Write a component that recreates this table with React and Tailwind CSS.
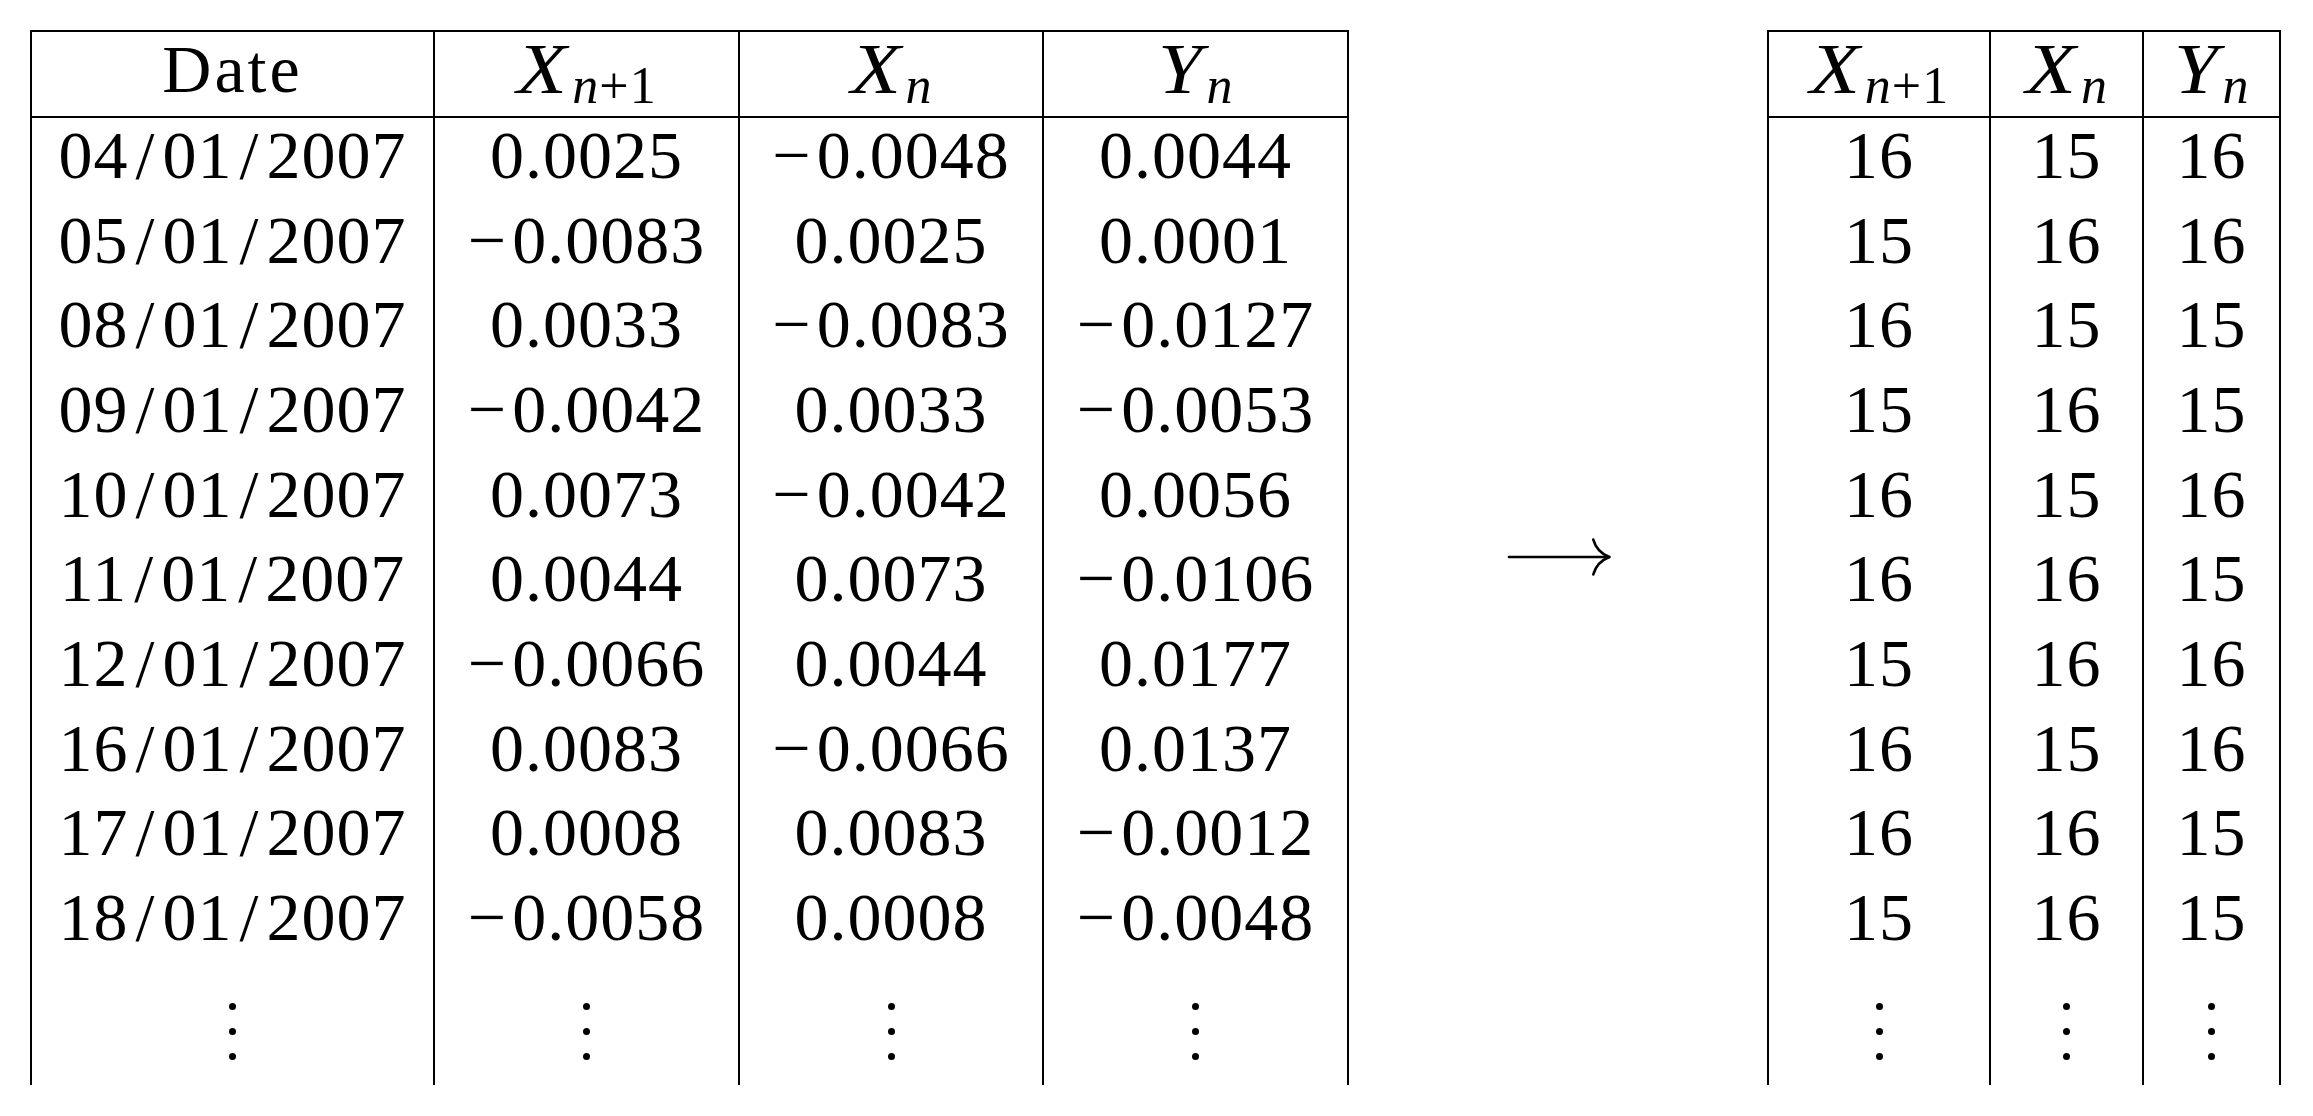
import React from "react";

const left = [
  ["04/01/2007", "0.0025", "−0.0048", "0.0044"],
  ["05/01/2007", "−0.0083", "0.0025", "0.0001"],
  ["08/01/2007", "0.0033", "−0.0083", "−0.0127"],
  ["09/01/2007", "−0.0042", "0.0033", "−0.0053"],
  ["10/01/2007", "0.0073", "−0.0042", "0.0056"],
  ["11/01/2007", "0.0044", "0.0073", "−0.0106"],
  ["12/01/2007", "−0.0066", "0.0044", "0.0177"],
  ["16/01/2007", "0.0083", "−0.0066", "0.0137"],
  ["17/01/2007", "0.0008", "0.0083", "−0.0012"],
  ["18/01/2007", "−0.0058", "0.0008", "−0.0048"],
];

const right = [
  ["16", "15", "16"],
  ["15", "16", "16"],
  ["16", "15", "15"],
  ["15", "16", "15"],
  ["16", "15", "16"],
  ["16", "16", "15"],
  ["15", "16", "16"],
  ["16", "15", "16"],
  ["16", "16", "15"],
  ["15", "16", "15"],
];

function Num({ v }) {
  if (v.startsWith("−")) {
    return (
      <span>
        <span className="mr-[5px]">−</span>
        {v.slice(1)}
      </span>
    );
  }
  return <span>{v}</span>;
}

function DateText({ v }) {
  const parts = v.split("/");
  return (
    <span>
      {parts[0]}
      <span className="mx-[7px]">/</span>
      {parts[1]}
      <span className="mx-[7px]">/</span>
      {parts[2]}
    </span>
  );
}

function Sym({ base, sub }) {
  const isX = base === "X";
  return (
    <span className="whitespace-nowrap">
      <span
        className={
          isX
            ? "inline-block italic text-[72px] scale-x-[1.14] ml-[4px] mr-[7px]"
            : "inline-block italic text-[72px] scale-x-[1.1] ml-[3px] mr-[5px]"
        }
      >
        {base}
      </span>
      <span className="text-[52px] leading-none align-[-10px] tracking-[1px]">
        <span className="italic">n</span>
        {sub}
      </span>
    </span>
  );
}

function Dots() {
  return (
    <div className="flex flex-col items-center pt-[38.5px] gap-[18px]">
      <div className="w-[7px] h-[7px] rounded-full bg-black" />
      <div className="w-[7px] h-[7px] rounded-full bg-black" />
      <div className="w-[7px] h-[7px] rounded-full bg-black" />
    </div>
  );
}

const headCell =
  "h-[86.3px] border-r-2 border-b-2 border-black text-center leading-[74px]";
const bodyCell = "h-[84.7px] border-r-2 border-black text-center leading-[74px]";
const dotCell = "h-[120px] border-r-2 border-black";

export default function App() {
  return (
    <div className="w-[2313px] h-[1116px] bg-white text-black font-['Liberation_Serif',serif] text-[68px] tracking-[1px]">
      <div className="flex items-start pl-[30px] pt-[29.7px]">
        {/* Left table */}
        <div className="grid grid-cols-[403px_305px_304px_305px] border-l-2 border-t-2 border-black">
          <div className={headCell}>
            <span className="tracking-[3px]">Date</span>
          </div>
          <div className={headCell}>
            <Sym base="X" sub="+1" />
          </div>
          <div className={headCell}>
            <Sym base="X" sub="" />
          </div>
          <div className={headCell}>
            <Sym base="Y" sub="" />
          </div>
          {left.map((r, i) => (
            <React.Fragment key={i}>
              <div className={bodyCell}>
                <DateText v={r[0]} />
              </div>
              <div className={bodyCell}>
                <Num v={r[1]} />
              </div>
              <div className={bodyCell}>
                <Num v={r[2]} />
              </div>
              <div className={bodyCell}>
                <Num v={r[3]} />
              </div>
            </React.Fragment>
          ))}
          <div className={dotCell}><Dots /></div>
          <div className={dotCell}><Dots /></div>
          <div className={dotCell}><Dots /></div>
          <div className={dotCell}><Dots /></div>
        </div>

        {/* Arrow */}
        <svg
          className="self-center ml-[158px] mr-[156px] shrink-0"
          width="104"
          height="40"
          viewBox="0 0 104 40"
          fill="none"
          stroke="black"
          strokeWidth="2.6"
          strokeLinecap="round"
        >
          <path d="M2 20 H101.5" />
          <path d="M86.3 2.6 Q89.7 15 102.3 20" />
          <path d="M86.3 37.4 Q89.7 25 102.3 20" />
        </svg>

        {/* Right table */}
        <div className="grid grid-cols-[222px_153px_137px] border-l-2 border-t-2 border-black">
          <div className={headCell}>
            <Sym base="X" sub="+1" />
          </div>
          <div className={headCell}>
            <Sym base="X" sub="" />
          </div>
          <div className={headCell}>
            <Sym base="Y" sub="" />
          </div>
          {right.map((r, i) => (
            <React.Fragment key={i}>
              <div className={bodyCell}>{r[0]}</div>
              <div className={bodyCell}>{r[1]}</div>
              <div className={bodyCell}>{r[2]}</div>
            </React.Fragment>
          ))}
          <div className={dotCell}><Dots /></div>
          <div className={dotCell}><Dots /></div>
          <div className={dotCell}><Dots /></div>
        </div>
      </div>
    </div>
  );
}
